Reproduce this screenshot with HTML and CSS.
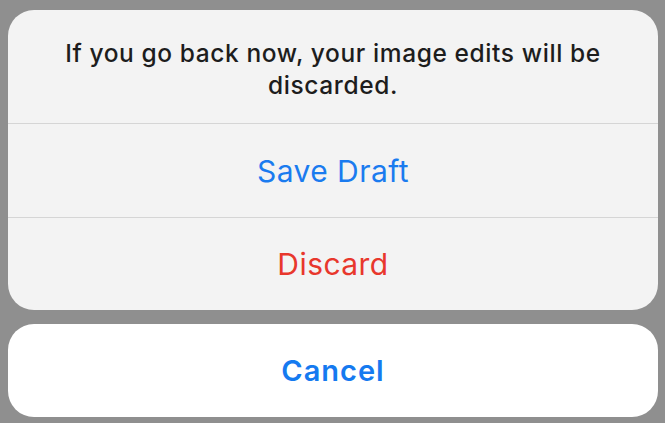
FILE: index.html
```html
<!DOCTYPE html>
<html lang="en">
<head>
<meta charset="utf-8">
<title>Action sheet</title>
<link rel="stylesheet" href="styles.css">
</head>
<body>
<div class="screen">
  <div class="sheet">
    <div class="group">
      <div class="message">If you go back now, your image edits will be discarded.</div>
      <button class="action action-default">Save Draft</button>
      <button class="action action-destructive">Discard</button>
    </div>
    <div class="group group-cancel">
      <button class="action action-cancel">Cancel</button>
    </div>
  </div>
</div>
</body>
</html>
```

FILE: styles.css
```css
* { box-sizing: border-box; }
html, body {
  margin: 0;
  padding: 0;
  background: #8f8f8f;
  width: 665px;
  height: 423px;
  overflow: hidden;
}
.screen {
  padding: 10px 7px 0 8px;
  font-family: Inter, "Noto Sans", "Liberation Sans", sans-serif;
}
.sheet {
  display: flex;
  flex-direction: column;
  gap: 14px;
  width: 650px;
}
.group {
  background: #f3f3f3;
  border-radius: 26px;
  overflow: hidden;
  display: flex;
  flex-direction: column;
}
.group-cancel {
  background: #ffffff;
}
.message {
  height: 113px;
  display: flex;
  align-items: center;
  justify-content: center;
  text-align: center;
  padding: 4px 50px 0;
  font-size: 24.5px;
  line-height: 32px;
  font-weight: 500;
  color: #1d1d1d;
  letter-spacing: 0.6px;
}
.action {
  display: flex;
  align-items: center;
  justify-content: center;
  height: 94px;
  border: 0;
  border-top: 1px solid #d5d5d5;
  background: transparent;
  font-family: inherit;
  font-size: 30px;
  font-weight: 400;
  letter-spacing: 0.45px;
  padding: 0;
  margin: 0;
  width: 100%;
}
.action-default { color: #1a7bef; }
.action-destructive { color: #e8372c; height: 93px; }
.action-cancel {
  border-top: 0;
  height: 93px;
  color: #157af0;
  font-weight: 600;
  font-size: 29px;
  letter-spacing: 1px;
}
```
